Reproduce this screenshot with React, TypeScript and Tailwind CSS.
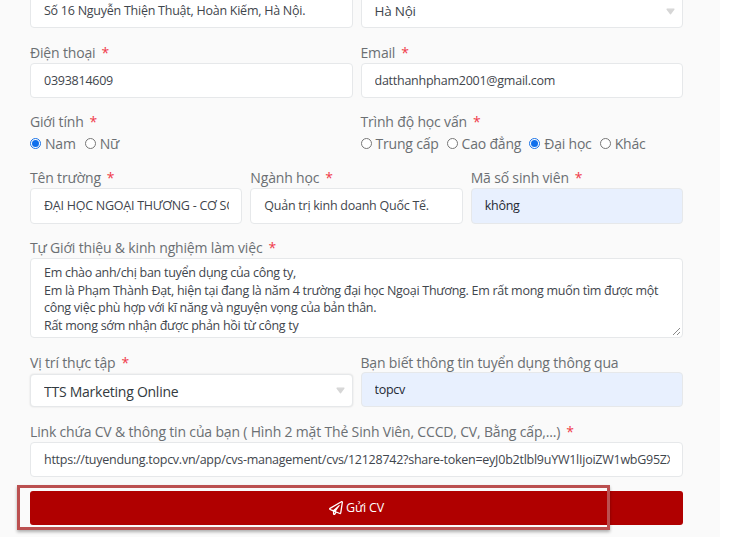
import React from 'react';
import { FaRegPaperPlane } from 'react-icons/fa';

function Label({ text, required = true }: { text: string; required?: boolean }) {
  return (
    <div className="h-[22px] text-[14px] leading-[24px] tracking-[-0.17px] text-[#6b6f73] whitespace-nowrap">
      {text}
      {required && <span className="ml-[6px] text-[#f03a4a]">*</span>}
    </div>
  );
}

function Field({
  value,
  autofill = false,
  caret = false,
  className = 'h-[35px] text-[12.5px]',
}: {
  value: string;
  autofill?: boolean;
  caret?: boolean;
  className?: string;
}) {
  return (
    <div
      className={`flex items-center rounded-[4px] border border-[#e6e8ea] pl-[13px] tracking-[-0.25px] ${
        caret ? 'pr-[7px]' : 'pr-[12px]'
      } ${autofill ? 'bg-[#e8f0fe] text-[#1f2933]' : 'bg-white text-[#3f464d]'} ${className}`}
    >
      <div className="flex-1 overflow-hidden whitespace-nowrap pt-[1px]">{value}</div>
      {caret && (
        <svg width="9" height="7" viewBox="0 0 9 7" className="shrink-0">
          <path d="M1 1.2h7L4.5 5.8z" fill="#d6d6d6" stroke="#d6d6d6" strokeWidth="1.2" strokeLinejoin="round" />
        </svg>
      )}
    </div>
  );
}

function Radio({ label, checked = false }: { label: string; checked?: boolean }) {
  return (
    <div className="flex items-center gap-[4px]">
      <span
        className={`flex h-[11px] w-[11px] items-center justify-center rounded-full border ${
          checked ? 'border-[#1a73e8]' : 'border-[#767676]'
        } bg-white`}
      >
        {checked && <span className="h-[7px] w-[7px] rounded-full bg-[#0f6fec]" />}
      </span>
      <span>{label}</span>
    </div>
  );
}

export default function App() {
  return (
    <div
      className="relative h-[537px] w-[745px] overflow-hidden bg-white"
      style={{ fontFamily: '"Open Sans", "Noto Sans", sans-serif' }}
    >
      <div className="mt-[-6px] flex h-[543px] w-[720px] flex-col bg-[#fafafa] pl-[30px] pr-[37px]">
        <div className="grid grid-cols-2 gap-x-[8px]">
          <Field value="Số 16 Nguyễn Thiện Thuật, Hoàn Kiếm, Hà Nội." className="h-[34px] text-[12.5px]" />
          <Field value="Hà Nội" caret className="h-[34px] pl-[12px] text-[13.5px]" />
        </div>

        <div className="mt-[13px] grid grid-cols-2 gap-x-[8px]">
          <div>
            <Label text="Điện thoại" />
            <Field value="0393814609" />
          </div>
          <div>
            <Label text="Email" />
            <Field value="datthanhpham2001@gmail.com" />
          </div>
        </div>

        <div className="mt-[12px] grid grid-cols-2 gap-x-[8px]">
          <div>
            <Label text="Giới tính" />
            <div className="flex h-[22px] items-center gap-[9px] text-[14px] tracking-[-0.2px] text-[#6b6f73]">
              <Radio label="Nam" checked />
              <Radio label="Nữ" />
            </div>
          </div>
          <div>
            <Label text="Trình độ học vấn" />
            <div className="flex h-[22px] items-center gap-[8px] text-[14px] tracking-[-0.2px] text-[#6b6f73]">
              <Radio label="Trung cấp" />
              <Radio label="Cao đẳng" />
              <Radio label="Đại học" checked />
              <Radio label="Khác" />
            </div>
          </div>
        </div>

        <div className="mt-[12px] grid grid-cols-3 gap-x-[8px]">
          <div>
            <Label text="Tên trường" />
            <Field value="ĐẠI HỌC NGOẠI THƯƠNG - CƠ SỞ 2" className="h-[36px] text-[12.5px]" />
          </div>
          <div>
            <Label text="Ngành học" />
            <Field value="Quản trị kinh doanh Quốc Tế." className="h-[36px] text-[12.5px]" />
          </div>
          <div>
            <Label text="Mã số sinh viên" />
            <Field value="không" autofill className="h-[36px] text-[12.5px]" />
          </div>
        </div>

        <div className="mt-[12px]">
          <Label text="Tự Giới thiệu & kinh nghiệm làm việc" />
          <div className="relative h-[80px] rounded-[4px] border border-[#e6e8ea] bg-white pl-[13px] pt-[5px] text-[12.5px] leading-[17.5px] tracking-[-0.28px] text-[#3f464d] whitespace-nowrap">
            <div>Em chào anh/chị ban tuyển dụng của công ty,</div>
            <div>Em là Phạm Thành Đạt, hiện tại đang là năm 4 trường đại học Ngoại Thương. Em rất mong muốn tìm được một</div>
            <div>công việc phù hợp với kĩ năng và nguyện vọng của bản thân.</div>
            <div>Rất mong sớm nhận được phản hồi từ công ty</div>
            <svg width="9" height="9" viewBox="0 0 9 9" className="absolute bottom-[1px] right-[1px]">
              <path d="M1 8L8 1M5 8L8 5" stroke="#8a8a8a" strokeWidth="1" />
            </svg>
          </div>
        </div>

        <div className="mt-[13px] grid grid-cols-2 gap-x-[8px]">
          <div>
            <div className="h-[23px]">
              <Label text="Vị trí thực tập" />
            </div>
            <Field
              value="TTS Marketing Online"
              caret
              className="h-[33px] border-[#dfe1e3] pl-[12px] text-[14px] text-[#333a40] shadow-[0_0_2px_rgba(0,0,0,0.12)]"
            />
          </div>
          <div>
            <div className="h-[21px]">
              <Label text="Bạn biết thông tin tuyển dụng thông qua" required={false} />
            </div>
            <Field value="topcv" autofill />
          </div>
        </div>

        <div className="mt-[13px]">
          <Label text="Link chứa CV & thông tin của bạn ( Hình 2 mặt Thẻ Sinh Viên, CCCD, CV, Bằng cấp,...)" />
          <Field value="https://tuyendung.topcv.vn/app/cvs-management/cvs/12128742?share-token=eyJ0b2tlbl9uYW1lIjoiZW1wbG95ZXIiLCJhbGciOiJIUzI1NiJ9" />
        </div>

        <button className="mt-[14px] flex h-[34px] w-full items-center justify-center gap-[3px] rounded-[3px] bg-[#b00000] text-[12.5px] tracking-[-0.2px] text-white">
          <FaRegPaperPlane className="h-[14px] w-[14px]" />
          Gửi CV
        </button>
      </div>

      <div className="absolute left-[17px] top-[485px] h-[45px] w-[593px] border-[3px] border-[#bb5050] shadow-[0_2px_3px_rgba(0,0,0,0.3)]" />
    </div>
  );
}
